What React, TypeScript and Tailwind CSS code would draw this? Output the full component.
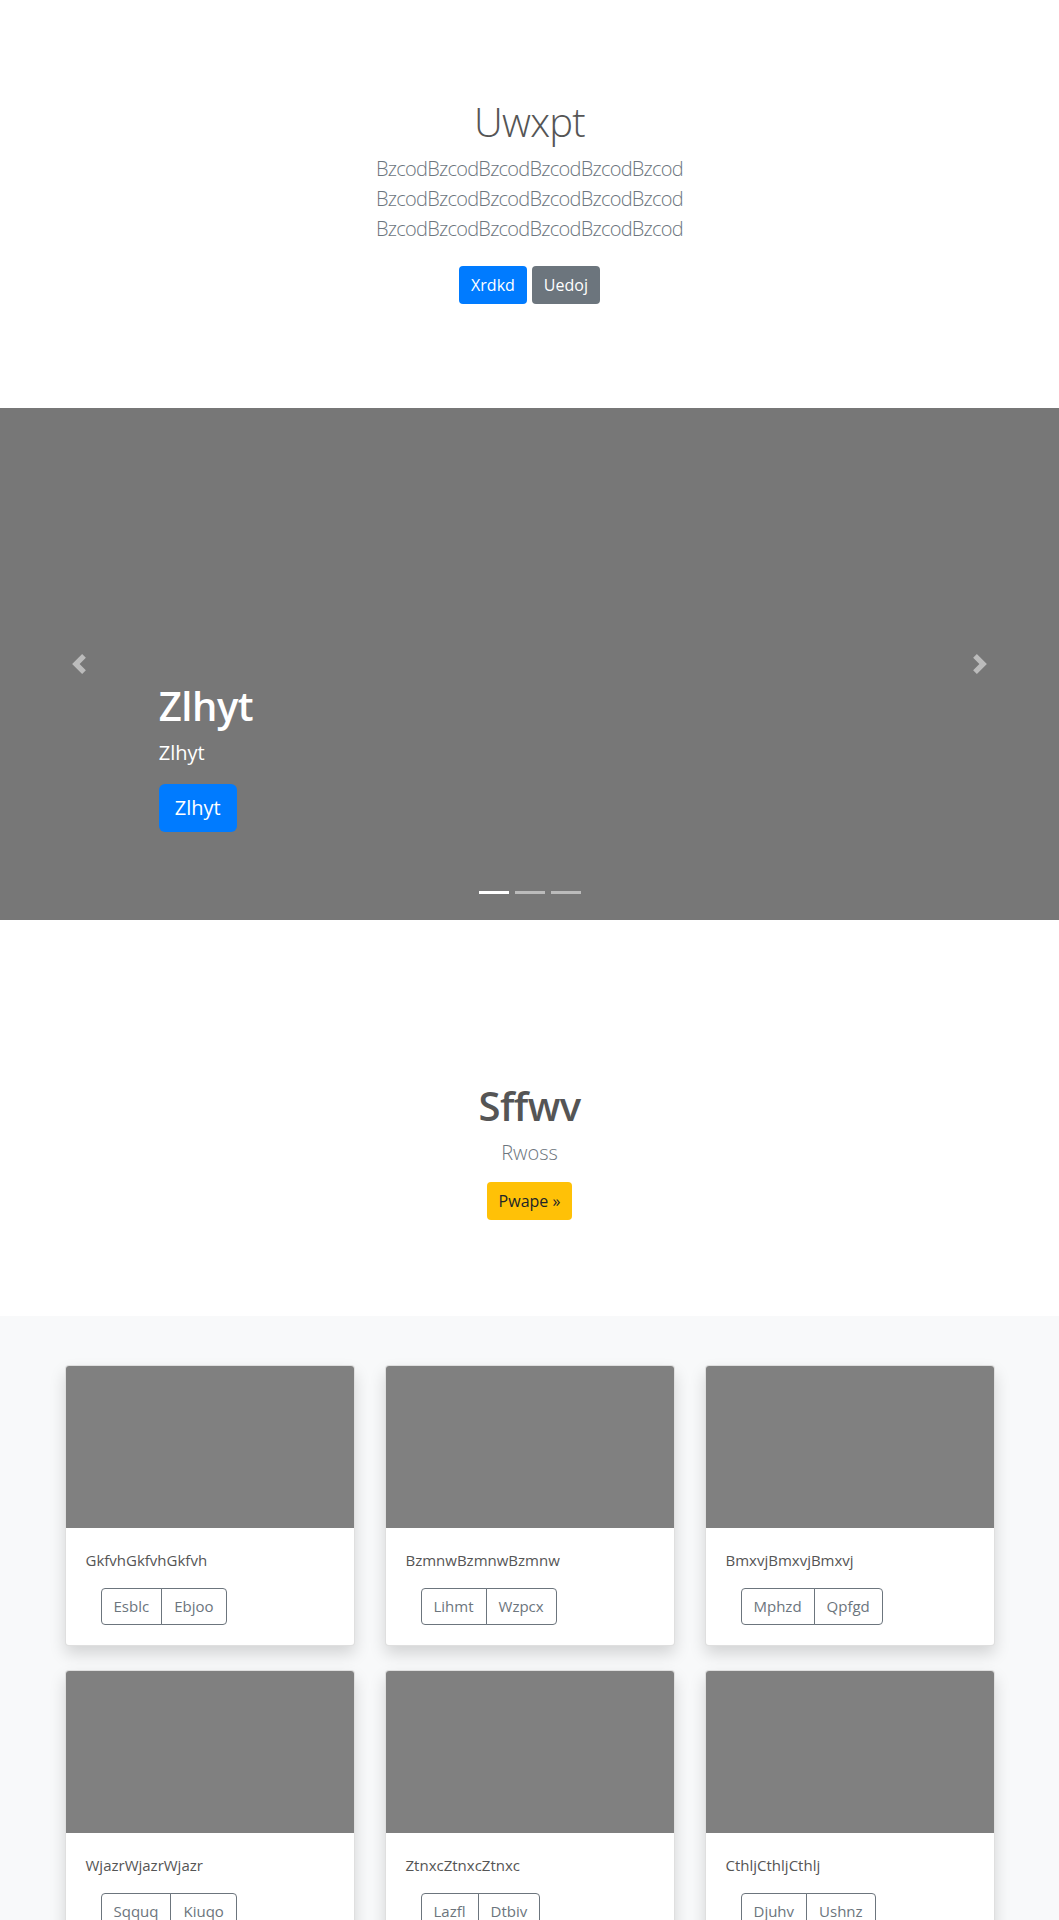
import React from "react";

const cards = [
  { text: "GkfvhGkfvhGkfvh", a: "Esblc", b: "Ebjoo" },
  { text: "BzmnwBzmnwBzmnw", a: "Lihmt", b: "Wzpcx" },
  { text: "BmxvjBmxvjBmxvj", a: "Mphzd", b: "Qpfgd" },
  { text: "WjazrWjazrWjazr", a: "Sqquq", b: "Kiuqo" },
  { text: "ZtnxcZtnxcZtnxc", a: "Lazfl", b: "Dtbiv" },
  { text: "CthljCthljCthlj", a: "Djuhv", b: "Ushnz" },
];

function PrevIcon() {
  return (
    <svg width="20" height="20" viewBox="0 0 8 8" fill="#fff">
      <path d="M5.25 0l-4 4 4 4 1.5-1.5-2.5-2.5 2.5-2.5-1.5-1.5z" />
    </svg>
  );
}

function NextIcon() {
  return (
    <svg width="20" height="20" viewBox="0 0 8 8" fill="#fff">
      <path d="M2.75 0l-1.5 1.5 2.5 2.5-2.5 2.5 1.5 1.5 4-4-4-4z" />
    </svg>
  );
}

export default function App() {
  return (
    <div className="bg-white font-['Open_Sans','Noto_Sans',sans-serif] text-[#555]">
      {/* Jumbotron */}
      <section className="pt-[98px] pb-[104px] text-center">
        <h1 className="text-[40px] font-light leading-[48px] mb-2 text-[#555] tracking-[-0.8px]">Uwxpt</h1>
        <p className="mx-auto w-[450px] text-[20px] font-light leading-[30px] text-[#6c757d] tracking-[-0.75px]">
          BzcodBzcodBzcodBzcodBzcodBzcod BzcodBzcodBzcodBzcodBzcodBzcod BzcodBzcodBzcodBzcodBzcodBzcod
        </p>
        <div className="mt-[22px] flex justify-center gap-[5px]">
          <a className="flex h-[38px] items-center rounded bg-[#007bff] px-3 text-[16px] text-white">Xrdkd</a>
          <a className="flex h-[38px] items-center rounded bg-[#6c757d] px-3 text-[16px] text-white">Uedoj</a>
        </div>
      </section>

      {/* Carousel */}
      <section className="relative h-[512px] bg-[#777] overflow-hidden">
        <div className="absolute left-0 top-0 bottom-0 flex w-[15%] items-center justify-center opacity-50">
          <PrevIcon />
        </div>
        <div className="absolute right-0 top-0 bottom-0 flex w-[15%] items-center justify-center opacity-50">
          <NextIcon />
        </div>
        <div className="absolute left-[15%] right-[15%] bottom-[88px] text-left text-white">
          <h1 className="text-[40px] font-semibold leading-[48px] mb-2 tracking-[-0.5px]">Zlhyt</h1>
          <p className="text-[20px] leading-[30px] mb-4">Zlhyt</p>
          <a className="inline-flex h-[48px] items-center rounded-md bg-[#007bff] px-4 text-[20px] text-white">Zlhyt</a>
        </div>
        <div className="absolute left-0 right-0 bottom-[26px] flex justify-center gap-[6px]">
          <span className="h-[3px] w-[30px] bg-white" />
          <span className="h-[3px] w-[30px] bg-white opacity-50" />
          <span className="h-[3px] w-[30px] bg-white opacity-50" />
        </div>
      </section>

      {/* Feature */}
      <section className="pt-[162px] pb-[96px] text-center">
        <h2 className="text-[40px] font-semibold leading-[48px] mb-2 text-[#555] tracking-[-0.6px]">Sffwv</h2>
        <p className="text-[20px] font-light leading-[30px] text-[#6c757d]">Rwoss</p>
        <div className="mt-[14px] flex justify-center">
          <a className="flex h-[38px] items-center rounded bg-[#ffc107] px-3 text-[16px] text-[#212529]">Pwape »</a>
        </div>
      </section>

      {/* Album */}
      <section className="bg-[#f8f9fa] pt-[49px] pb-12">
        <div className="mx-auto w-[960px] px-[15px]">
          <div className="grid grid-cols-3 gap-x-[30px] gap-y-6">
            {cards.map((c) => (
              <div
                key={c.text}
                className="overflow-hidden rounded border border-black/[.125] bg-white shadow-[0_8px_16px_rgba(0,0,0,0.15)]"
              >
                <div className="h-[162px] bg-[#808080]" />
                <div className="p-5">
                  <p className="mb-4 text-[15px] leading-6 text-[#555]">{c.text}</p>
                  <div className="ml-[15px] flex">
                    <a className="flex h-[37px] items-center rounded-l border border-[#6c757d] px-3 text-[15px] text-[#6c757d]">
                      {c.a}
                    </a>
                    <a className="-ml-px flex h-[37px] items-center rounded-r border border-[#6c757d] px-3 text-[15px] text-[#6c757d]">
                      {c.b}
                    </a>
                  </div>
                </div>
              </div>
            ))}
          </div>
        </div>
      </section>
    </div>
  );
}
